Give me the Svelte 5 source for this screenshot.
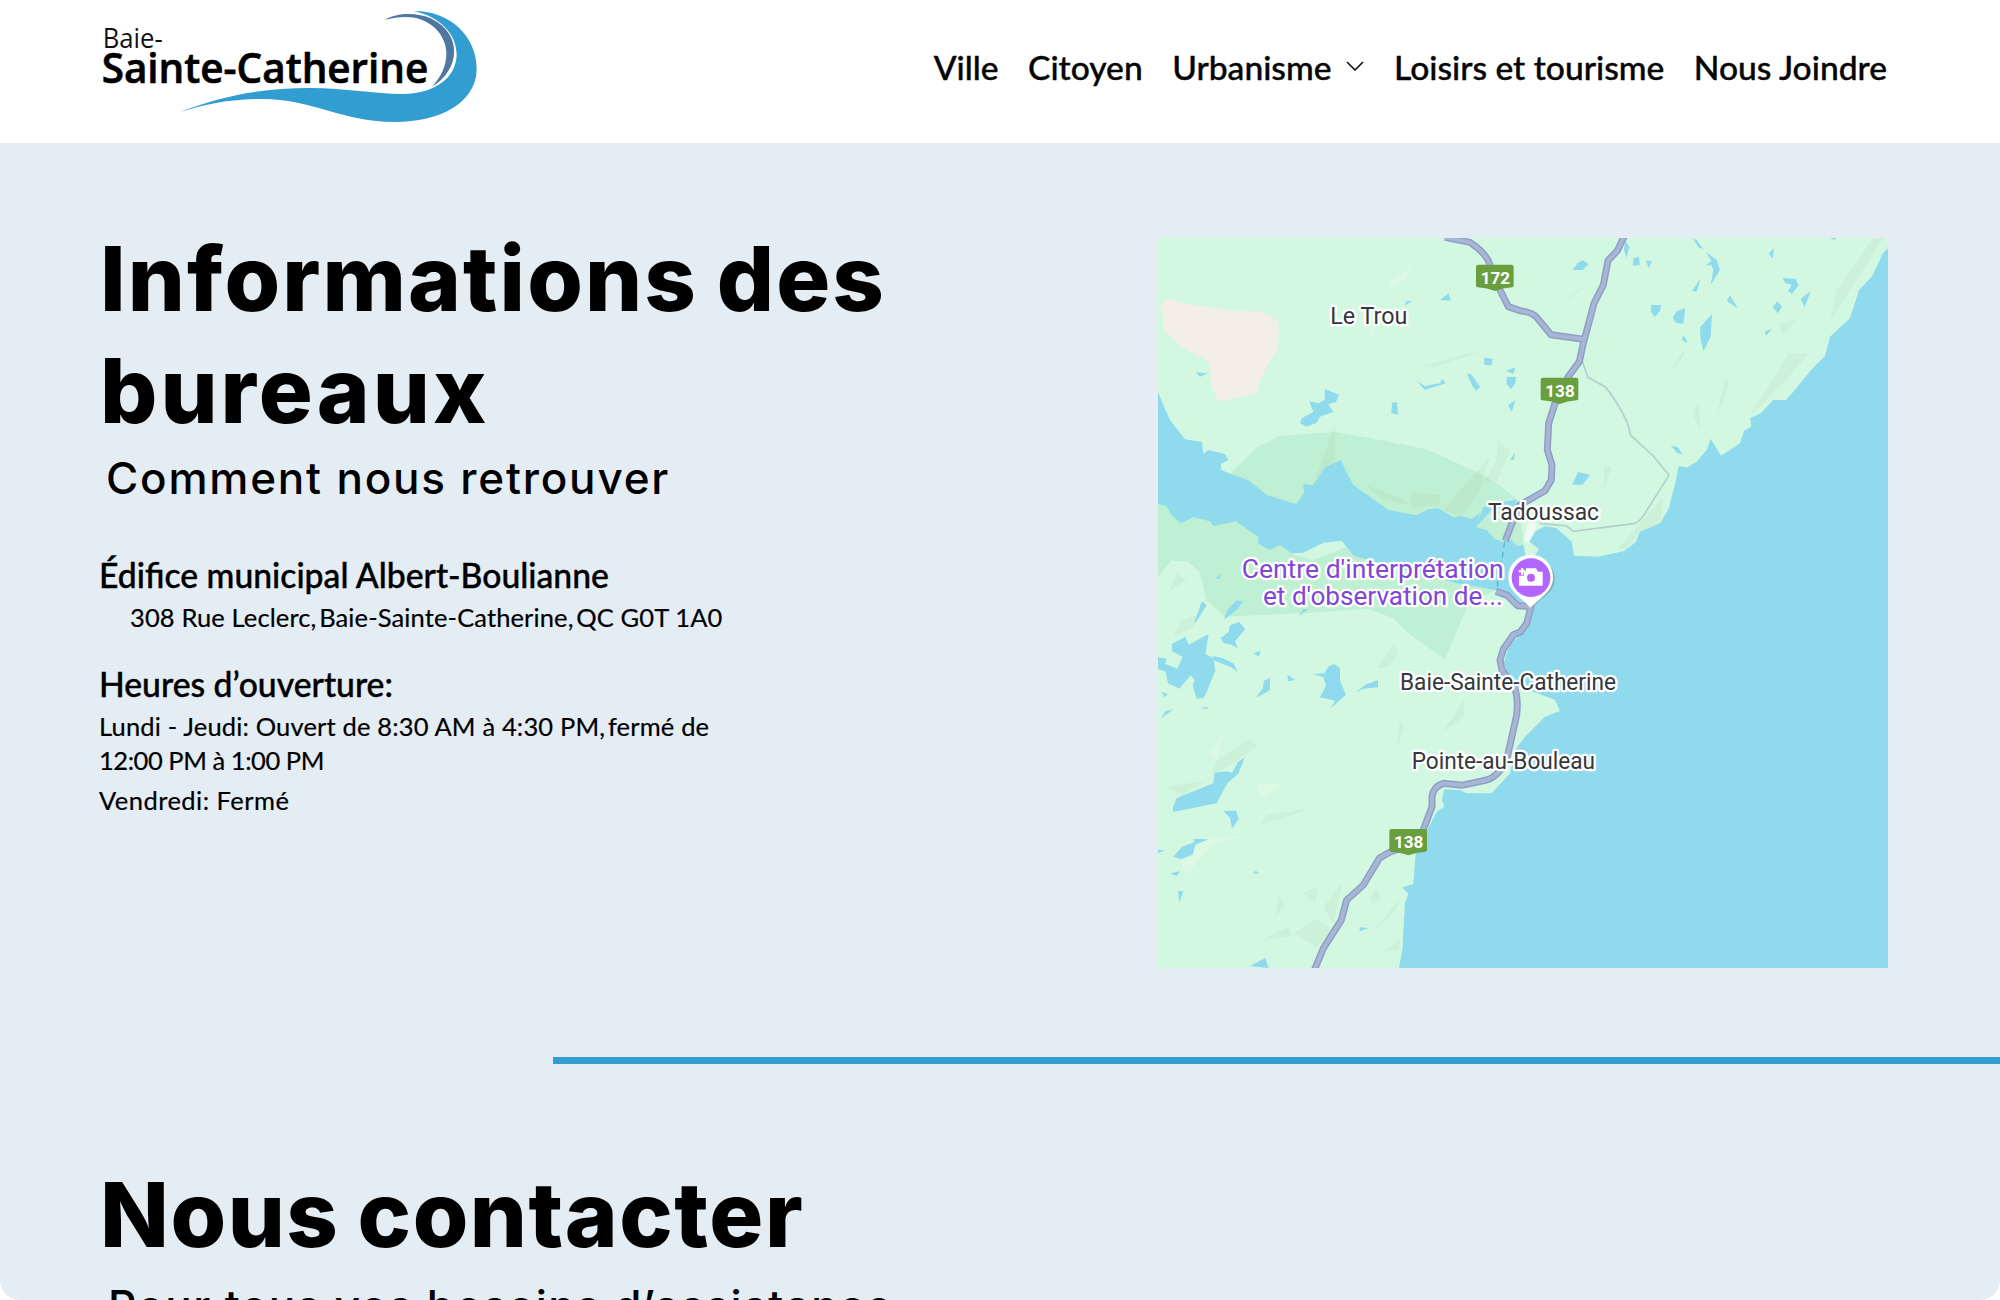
<script>
  const navLeft = ['Ville', 'Citoyen'];
  const navRight = ['Loisirs et tourisme', 'Nous Joindre'];

  // Map drawing units: 3 per CSS pixel, visible window starts at 24,24.
  const shields = [
    { x: 978, y: 104, n: '172' },
    { x: 1172, y: 443, n: '138' },
    { x: 718, y: 1797, n: '138' }
  ];
  const lakes = [
    '525,477 567,494 558,516 535,522 550,546 510,560 500,578 470,590 450,580 456,564 490,546 478,514 505,520 524,510',
    '138,427 174,430 150,440', '726,518 740,516 745,554 724,550', '950,430 965,434 990,470 980,483 968,470',
    '800,452 824,468 870,460 876,447 888,460 860,468 825,480', '1003,382 1028,388 1025,406 1003,405',
    '870,210 896,190 902,212', '762,228 770,214 788,212', '1068,422 1096,412 1090,432', '1070,440 1098,440 1096,460 1083,478 1070,462',
    '1074,526 1097,510 1085,545', '1080,690 1095,668 1092,690', '195,1046 215,1030 208,1046',
    '1268,120 1282,100 1298,90 1316,102 1298,120', '1425,30 1438,50 1430,84 1422,60', '1450,84 1466,80 1470,105 1448,108', '1488,92 1506,93 1496,114',
    '1628,24 1642,32 1660,58 1645,52', '1668,66 1700,90 1710,120 1682,165 1690,120 1684,106 1666,106 1684,94', '1626,182 1652,145 1640,186',
    '1504,224 1534,226 1530,242 1514,262 1502,244', '1568,264 1580,244 1606,234 1600,282 1578,278', '1650,292 1686,252 1682,320 1660,364 1652,330',
    '1595,330 1602,314 1613,340', '1730,212 1740,196 1764,236', '1856,70 1872,54 1868,86', '1898,144 1936,146 1946,166 1926,192 1914,184 1925,164 1906,160',
    '1952,206 1982,184 1964,232', '1868,232 1882,214 1896,230 1884,250', '1845,304 1866,296 1848,318', '2040,24 2060,24 2052,30',
    '1562,646 1584,652 1598,674 1580,668', '1266,764 1284,726 1320,734 1298,764',
    '132,1180 156,1114 170,1126 140,1174', '222,1170 232,1140 258,1112 280,1112 262,1138',
    '66,1242 106,1220 116,1244 176,1212 166,1272 190,1284 196,1322 162,1404 140,1406 128,1368 134,1350 122,1336 88,1376 54,1360 46,1324 24,1318 24,1282 50,1286 46,1302 82,1316 98,1280 66,1264',
    '190,1278 216,1284 250,1300 264,1326 240,1310 188,1290', '212,1224 236,1206 240,1186 268,1176 286,1198 256,1232 262,1254 244,1244 220,1238',
    '310,1270 332,1262 326,1280', '318,1402 338,1376 342,1352 360,1344 360,1380 336,1394', '412,1334 436,1350 414,1354',
    '488,1332 524,1330 534,1310 552,1302 570,1314 570,1352 588,1394 540,1436 556,1412 510,1402 528,1366 520,1342', '616,1388 646,1364 684,1350 684,1372 640,1376',
    '34,1386 54,1392 44,1402', '32,1466 46,1444 70,1438', '152,1434 168,1430 176,1438', '445,1160 460,1138 476,1136',
    '68,1734 80,1704 190,1660 194,1628 230,1624 246,1628 264,1596 284,1582 266,1630 232,1660 200,1720 70,1746', '220,1742 258,1742 266,1766 246,1796 240,1764',
    '70,1880 96,1850 134,1836 130,1826 176,1828 136,1844 128,1874 92,1888', '60,1930 90,1924 80,1938', '84,1984 100,1984 88,2018', '24,1860 44,1860 24,1870', '308,1930 318,1922 328,1932',
    '628,2092 656,2094 630,2104', '300,2208 346,2184 356,2214', '978,890 1000,830 1060,815 1100,810 1100,826 1025,840'
  ];
  const slopes = [
    '672,140 720,30 690,100', '806,406 850,400 1000,360 910,392 850,412', '880,838 1020,680 985,790 930,862', '780,820 788,788 874,796 864,828 800,832', '640,762 770,812 775,826 700,808',
    '490,765 556,580 553,700', '1042,628 1080,665 1038,760 1005,750 1040,690', '2170,24 2200,24 2040,275 2060,180', '1798,560 1916,370 1976,370 1908,450', '1888,280 1940,270 1898,314',
    '1728,440 1736,468 1696,570', '1625,546 1648,520 1650,600', '1560,430 1600,360 1602,376', '1220,240 1270,190 1325,150', '1362,704 1384,710 1364,780',
    '680,1316 730,1246 745,1270 715,1310', '50,1670 180,1650 200,1590 300,1526 322,1548 240,1606 100,1694', '876,1508 942,1410 942,1462', '750,1470 764,1490 738,1558',
    '330,1782 350,1756 474,1736 400,1764', '70,1220 90,1176 150,1150 130,1190', '340,2128 415,2090 426,2120', '430,2110 500,2066 545,2100 500,2150', '460,1990 502,1970 496,2020',
    '520,2030 576,1960 550,2080', '376,2060 386,1994 404,2030', '660,2004 680,1976 692,2002 668,2026', '672,2100 755,2000 730,2050', '700,2164 750,2130 745,2162', '60,1080 80,1030 110,1054', '1402,956 1540,800 1530,880 1470,905 1430,956'
  ];
  const pale = ['715,182 720,154 788,108 766,146', '655,334 668,288 676,300', '318,1664 398,1660 340,1704', '180,1570 220,1510 200,1590', '88,1870 150,1830 290,1816 190,1840 108,1938'];
</script>

<div class="page">
  <header>
    <svg class="logo" viewBox="60 15 1140 360" role="img" aria-label="Baie-Sainte-Catherine">
      <path fill="#329dd0" d="M1002 33C1110 32 1191 110 1190 208C1188 310 1080 366 945 366C790 366 690 296 545 297C440 298 375 314 300 336C420 290 540 264 690 264C800 264 880 282 970 282C1070 280 1128 230 1130 165C1130 100 1078 50 1002 33Z" />
      <path fill="#50779f" d="M915 59C950 38 1010 36 1055 56C1150 104 1140 210 1056 260C1112 200 1112 130 1065 84C1022 44 968 46 915 59Z" />
      <text class="logo-top" x="68" y="143" textLength="180" lengthAdjust="spacingAndGlyphs">Baie-</text>
      <text class="logo-main" x="65" y="248" textLength="980" lengthAdjust="spacingAndGlyphs">Sainte-Catherine</text>
    </svg>
    <nav>
      {#each navLeft as item}<a href="#top">{item}</a>{/each}
      <a href="#top" class="drop">Urbanisme
        <svg class="chev" viewBox="0 0 18 10"><path d="M1 1l8 8 8-8" fill="none" stroke="#111" stroke-width="1.6" /></svg>
      </a>
      {#each navRight as item}<a href="#top">{item}</a>{/each}
    </nav>
  </header>

  <main>
    <section class="info">
      <div class="details">
        <h1><span class="t1">Informations des</span><br /><span class="t2">bureaux</span></h1>
        <p class="sub">Comment nous retrouver</p>
        <h3 class="place">Édifice municipal Albert-Boulianne</h3>
        <p class="address">308 Rue Leclerc<span class="comma">,</span> Baie-Sainte-Catherine<span class="comma">,</span> QC G0T 1A0</p>
        <h3 class="hours">Heures d’ouverture:</h3>
        <p class="line week">Lundi - Jeudi: Ouvert de 8:30 AM à 4:30 PM<span class="comma">,</span> fermé de<br /><span class="noon">12:00 PM à 1:00 PM</span></p>
        <p class="line friday">Vendredi: Fermé</p>
      </div>

      <svg class="map" viewBox="24 24 2190 2190">
        <rect x="24" y="24" width="2190" height="2190" fill="#d3f8e2" />
        <path fill="#f4efe5" d="M34 222L52 206L100 220L230 240L330 246Q372 258 385 280L384 350L350 412L330 450L322 490L206 514L186 470L178 400L165 386L92 350L42 298Z" />
        <path fill="#bff0d3" d="M245 726L322 652L390 617L555 606L680 628L830 658L1000 735L1060 775L1110 815L1120 950L950 950L400 900Z" />
        <path fill="#bff0d3" d="M24 820L440 920L620 960L1050 1070L1000 1100L950 1135L885 1288L770 1206L730 1164L650 1136L480 1148L225 1160L168 1110L150 1028L115 996L64 992L24 1040Z" />
        <path fill="#d3f8e2" d="M425 972L520 938L575 932L590 950L490 990Z" />
        {#each slopes as p}<polygon points={p} fill="#a9b79a" fill-opacity=".13" />{/each}
        {#each pale as p}<polygon points={p} fill="#ddf9e1" />{/each}
        <path fill="#90daee" d="M2214 55L2200 68L2165 140L2127 180L2100 265L2040 320L2025 378L1985 418L1930 485L1908 510L1870 510L1832 550L1800 565L1804 590L1782 602L1770 640L1713 677L1682 626L1670 660L1640 695L1612 712L1586 709L1576 760L1555 838L1530 880L1470 905L1457 937L1422 963L1345 980L1272 977L1265 935L1220 895L1185 888L1155 905L1138 935L1167 957L1152 980L1128 980L1120 945L1100 948L1085 930L1060 937L1030 925L1010 900L978 892L990 850L965 866L935 858L910 862L865 835L835 838L800 856L715 840L660 800L610 765L590 728L573 690L525 712L490 765L460 762L462 790L438 822L350 795L298 752L213 720L213 702L235 690L225 672L175 660L160 672L156 636L105 628L60 570L40 525L24 485L24 822L50 828L60 850L92 880L130 862L180 874L190 888L258 874L325 922L323 940L358 960L390 945L425 970L460 968L520 938L575 932L612 978L920 1060L960 1066L1035 1080L1090 1110L1145 1140L1135 1180L1110 1215L1080 1240L1062 1295L1070 1330L1100 1370L1150 1385L1215 1410L1230 1443L1185 1460L1125 1520L1095 1560L1080 1630L1025 1690L950 1690L930 1680L882 1678L876 1710L883 1730L860 1745L835 1795L797 1870L790 1962L756 1972L775 1992L765 2020L757 2160L747 2214L2214 2214Z" />
        {#each lakes as p}<polygon points={p} fill="#90daee" />{/each}
        <path fill="#effaf2" d="M1132 880L1163 880L1150 912L1134 942L1122 930Z" />
        <path class="trail" d="M1296 392L1314 442L1365 470Q1400 510 1432 578L1442 616L1510 678L1557 736L1490 842Q1475 870 1456 880L1270 904L1250 888L1170 880" />
        <path class="ferry" d="M1064 935L1056 990L1044 1015L1042 1084" />
        {#each ['edge', 'core'] as c}
          <g class="road {c}">
            <path d="M885 22L960 37Q1010 70 1020 105L1050 180L1075 230L1110 242Q1145 246 1160 262L1203 314L1300 328" />
            <path d="M1422 20L1402 62L1374 92L1360 165L1332 220L1300 340L1288 395L1255 440L1215 520L1196 580L1192 660L1206 705L1204 750L1185 782L1110 825L1082 890L1066 932" />
            <path d="M1038 1084L1072 1096L1103 1127L1143 1130L1130 1180L1112 1205L1090 1214L1060 1258L1050 1290L1056 1320L1092 1370Q1106 1400 1100 1455L1070 1590Q1045 1640 1010 1650L935 1666L880 1660Q850 1670 846 1700L846 1730L812 1820L768 1850L720 1866L688 1885L640 1965L590 2010L574 2070L520 2155L494 2218" />
          </g>
        {/each}
        {#each shields as s}
          <g transform="translate({s.x} {s.y})">
            <path fill="#6a9f3f" d="M7 0H106Q113 0 113 7V64Q113 67 108 68Q80 70 57 79Q34 70 5 68Q0 67 0 64V7Q0 0 7 0Z" />
            <text class="num" x="58" y="57" textLength="88" lengthAdjust="spacingAndGlyphs">{s.n}</text>
          </g>
        {/each}
        <g class="town">
          <text x="541" y="281" textLength="231" lengthAdjust="spacingAndGlyphs">Le Trou</text>
          <text x="1014" y="869" textLength="333" lengthAdjust="spacingAndGlyphs">Tadoussac</text>
          <text x="750" y="1379" textLength="648" lengthAdjust="spacingAndGlyphs">Baie-Sainte-Catherine</text>
          <text x="785" y="1617" textLength="550" lengthAdjust="spacingAndGlyphs">Pointe-au-Bouleau</text>
        </g>
        <g class="poi">
          <text x="275" y="1045" textLength="786" lengthAdjust="spacingAndGlyphs">Centre d'interprétation</text>
          <text x="339" y="1124" textLength="720" lengthAdjust="spacingAndGlyphs">et d'observation de...</text>
        </g>
        <path fill="#6d8797" fill-opacity=".5" d="M1146 982C1185 982 1214 1010 1214 1048C1214 1082 1192 1090 1146 1134C1106 1092 1080 1084 1080 1048Z" />
        <path fill="#fff" d="M1142 974C1182 974 1209 1004 1209 1042C1209 1082 1178 1098 1142 1133C1106 1098 1075 1082 1075 1042C1075 1004 1104 974 1142 974Z" />
        <circle cx="1143" cy="1043" r="58" fill="#b266ff" />
        <path fill="#fff" d="M1128 1015H1158L1164 1025H1178V1067H1107V1037H1122V1025H1128ZM1113 1014H1120V1021H1127V1027H1120V1034H1113V1027H1106V1021H1113Z" />
        <circle cx="1143" cy="1043" r="12" fill="#b266ff" />
      </svg>
    </section>

    <hr />

    <section class="contact">
      <h1 class="t3">Nous contacter</h1>
      <p class="sub more">Pour tous vos besoins d’assistance</p>
    </section>
  </main>
</div>

<style>
  :global(body) { margin: 0; background: #fff; }
  .page { width: 2000px; height: 1300px; overflow: hidden; display: flex; flex-direction: column; background: #fff; color: #000; font-family: Lato, sans-serif; }
  header { height: 143px; flex: none; box-sizing: border-box; padding: 5px 113px 18px 100px; display: flex; justify-content: space-between; align-items: center; }
  .logo { width: 380px; height: 120px; overflow: visible; }
  .logo-top { font: 400 80px "Open Sans", sans-serif; fill: #111; }
  .logo-main { font: 600 126px "Open Sans", sans-serif; fill: #000; stroke: #000; stroke-width: 2; }
  nav { display: flex; gap: 29.5px; font-size: 33.6px; font-weight: 500; line-height: 40px; padding-top: 4px; -webkit-text-stroke: .4px #050505; }
  nav a { color: #050505; text-decoration: none; white-space: nowrap; }
  .drop { display: flex; align-items: center; gap: 15px; }
  .chev { width: 18px; height: 10px; margin-top: -2px; }
  main { flex: 1; min-height: 0; overflow: hidden; background: #e4ecf4; border-radius: 0 0 20px 20px; }
  .info { height: 914px; box-sizing: border-box; padding: 80px 112px 0 100px; display: flex; justify-content: space-between; }
  .details { white-space: nowrap; }
  h1, h3, p { margin: 0; }
  h1 { font: 800 90px/112px Inter, sans-serif; word-spacing: -3px; }
  .t1 { letter-spacing: 2.1px; }
  .t2 { letter-spacing: 3px; }
  .t3 { letter-spacing: 1.5px; }
  .sub { font: 500 44px/56px Inter, sans-serif; margin: 3px 0 0 6px; letter-spacing: 1.8px; }
  h3 { font-size: 33.7px; line-height: 40px; font-weight: 500; margin-left: -1px; -webkit-text-stroke: .4px #000; }
  .place { margin-top: 49px; }
  .address { font-size: 25.5px; line-height: 33px; margin: 6px 0 0 30px; letter-spacing: .12px; }
  .hours { margin-top: 30px; }
  .line { font-size: 25.5px; line-height: 33px; margin: 7px 0 0 -1px; }
  .address, .line { -webkit-text-stroke: .2px #000; }
  .week { margin-top: 6px; letter-spacing: .16px; line-height: 33.5px; }
  .noon { letter-spacing: -.45px; }
  .friday { margin-top: 7px; letter-spacing: .47px; }
  .comma { margin-right: -4px; }
  .map { width: 730px; height: 730px; margin-top: 15px; flex: none; display: block; }
  .trail { fill: none; stroke: #b4cfcb; stroke-width: 5; }
  .ferry { fill: none; stroke: #55b5ca; stroke-width: 4; stroke-dasharray: 18 12; }
  .road { fill: none; stroke-linejoin: round; }
  .edge { stroke: #8d9fc7; stroke-width: 21; }
  .core { stroke: #a8b6d4; stroke-width: 12; }
  .num { font: 700 52px Roboto, sans-serif; fill: #fff; text-anchor: middle; }
  .town { font: 400 70px Roboto, sans-serif; fill: #34383d; stroke: #fff; stroke-width: 14; stroke-linejoin: round; paint-order: stroke; }
  .poi { font: 400 78px Roboto, sans-serif; fill: #8146d6; stroke: #fff; stroke-width: 14; stroke-linejoin: round; paint-order: stroke; }
  hr { border: 0; height: 7px; margin: 0 0 0 553px; background: #329dd0; }
  .contact { padding: 95px 100px 0; white-space: nowrap; }
  .more { margin: 7px 0 0 8px; letter-spacing: 1.4px; }
</style>
